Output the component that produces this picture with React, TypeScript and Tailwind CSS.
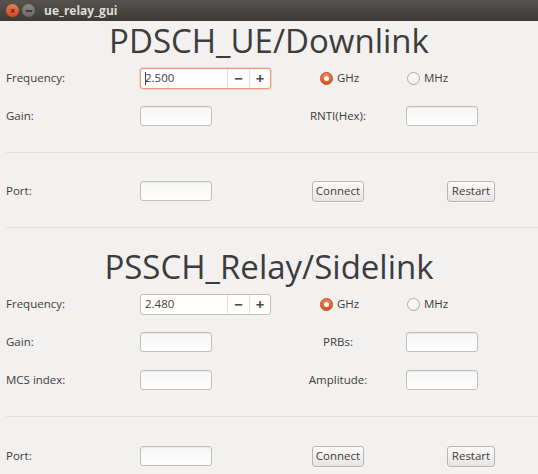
import React from 'react';

const font = { fontFamily: '"Open Sans", "DejaVu Sans", sans-serif' };

const TextBox: React.FC = () => (
  <div className="h-[20px] w-[72px] rounded-[3px] border border-[#c2beb8] bg-gradient-to-b from-[#f6f6f6] to-white shadow-[inset_0_1px_1px_rgba(0,0,0,0.06)]" />
);

const PushButton: React.FC<{ label: string; width: string }> = ({ label, width }) => (
  <button
    type="button"
    className={`flex h-[21px] items-center justify-center rounded-[3px] border border-[#b9b5af] bg-gradient-to-b from-[#fbfbfa] to-[#e7e5e2] text-[11.5px] text-[#3c3c3c] shadow-[0_1px_0_rgba(255,255,255,0.6)] ${width}`}
  >
    {label}
  </button>
);

const SpinBox: React.FC<{ value: string; focused?: boolean }> = ({ value, focused }) => (
  <div
    className={`flex h-[21px] w-[131px] overflow-hidden rounded-[3px] border bg-white ${
      focused ? 'border-[#ec9a7b] shadow-[0_0_0_1px_rgba(240,160,130,0.35)]' : 'border-[#c2beb8]'
    }`}
  >
    <div className="flex flex-1 items-center pl-[4px] text-[11.5px] text-[#3c3c3c]">
      {focused && <span className="mr-[-1px] h-[13px] w-px bg-[#3c3c3c]" />}
      {value}
    </div>
    <div className="flex w-[22px] items-center justify-center border-l border-[#e2dfdb] text-[15px] font-bold leading-none text-[#4a4a4a]">
      −
    </div>
    <div className="flex w-[21px] items-center justify-center border-l border-[#e2dfdb] text-[15px] font-bold leading-none text-[#4a4a4a]">
      +
    </div>
  </div>
);

const Radio: React.FC<{ label: string; checked?: boolean }> = ({ label, checked }) => (
  <div className="flex items-center gap-[4px]">
    {checked ? (
      <span className="flex h-[13px] w-[13px] items-center justify-center rounded-full border border-[#c0461c] bg-gradient-to-b from-[#f08358] to-[#dc4f1f]">
        <span className="h-[5px] w-[5px] rounded-full bg-white" />
      </span>
    ) : (
      <span className="h-[13px] w-[13px] rounded-full border border-[#aeaaa4] bg-gradient-to-b from-white to-[#f2f1ef]" />
    )}
    <span className="text-[11.5px] text-[#3c3c3c]">{label}</span>
  </div>
);

const Label: React.FC<{ children: React.ReactNode }> = ({ children }) => (
  <div className="w-[134px] text-[11.5px] text-[#3c3c3c]">{children}</div>
);

const SideLabel: React.FC<{ children: React.ReactNode }> = ({ children }) => (
  <div className="w-[116px] text-center text-[11.5px] text-[#3c3c3c]">{children}</div>
);

const FreqRow: React.FC<{ value: string; focused?: boolean }> = ({ value, focused }) => (
  <div className="flex h-[38px] items-center pl-[6px]">
    <Label>Frequency:</Label>
    <div className="w-[140px]">
      <SpinBox value={value} focused={focused} />
    </div>
    <div className="flex pl-[40px]">
      <div className="w-[87px]">
        <Radio label="GHz" checked />
      </div>
      <Radio label="MHz" />
    </div>
  </div>
);

const PairRow: React.FC<{ left: string; right: string }> = ({ left, right }) => (
  <div className="flex h-[38px] items-center pl-[6px]">
    <Label>{left}</Label>
    <div className="w-[140px]">
      <TextBox />
    </div>
    <SideLabel>{right}</SideLabel>
    <div className="ml-[10px]">
      <TextBox />
    </div>
  </div>
);

const PortRow: React.FC = () => (
  <div className="flex h-[38px] items-center pl-[6px]">
    <Label>Port:</Label>
    <div className="w-[140px]">
      <TextBox />
    </div>
    <div className="ml-[32px]">
      <PushButton label="Connect" width="w-[52px]" />
    </div>
    <div className="ml-[83px]">
      <PushButton label="Restart" width="w-[48px]" />
    </div>
  </div>
);

const Separator: React.FC = () => (
  <div className="pl-[6px] pt-[17px]">
    <div className="h-px bg-[#e2e0dd]" />
  </div>
);

const Heading: React.FC<{ text: string; height: string }> = ({ text, height }) => (
  <div className={`flex items-end justify-center pb-[2px] ${height}`}>
    <span className="text-[33px] leading-[33px] text-[#3c3c3c]">{text}</span>
  </div>
);

export default function App() {
  return (
    <div className="h-[474px] w-[538px] overflow-hidden bg-[#f2f1f0]" style={font}>
      <div className="flex h-[21px] items-center bg-gradient-to-b from-[#55534e] to-[#3c3b37] pl-[6px]">
        <span className="flex h-[13px] w-[13px] items-center justify-center rounded-full bg-gradient-to-b from-[#f07a52] to-[#d4461d] text-[9px] font-bold leading-none text-[#4a2114]">
          ×
        </span>
        <span className="ml-[3px] flex h-[13px] w-[13px] items-center justify-center rounded-full bg-gradient-to-b from-[#8a8883] to-[#6a6864]">
          <span className="h-[2px] w-[6px] bg-[#3c3b37]" />
        </span>
        <span className="ml-[9px] text-[12px] font-bold text-[#dfdbd2]">ue_relay_gui</span>
      </div>

      <Heading text="PDSCH_UE/Downlink" height="h-[38px]" />
      <FreqRow value="2.500" focused />
      <PairRow left="Gain:" right="RNTI(Hex):" />
      <Separator />
      <div className="h-[19px]" />
      <PortRow />
      <Separator />

      <Heading text="PSSCH_Relay/Sidelink" height="h-[57px]" />
      <FreqRow value="2.480" />
      <PairRow left="Gain:" right="PRBs:" />
      <PairRow left="MCS index:" right="Amplitude:" />
      <Separator />
      <div className="h-[20px]" />
      <PortRow />
    </div>
  );
}
